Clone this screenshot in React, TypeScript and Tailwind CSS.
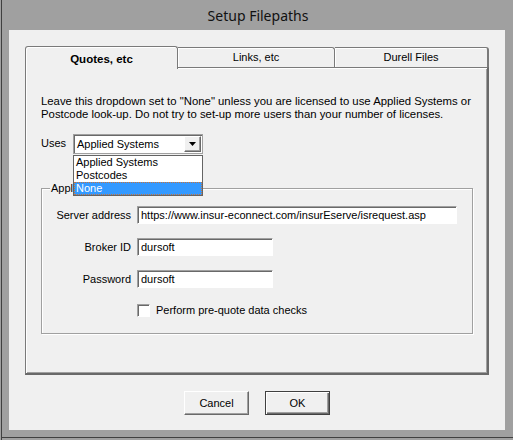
const sunken =
  "bg-white border border-t-[#a0a0a0] border-l-[#a0a0a0] border-r-white border-b-white shadow-[inset_1px_1px_0_#696969]";

function TextBox({ value, width }: { value: string; width: string }) {
  return (
    <div className={`${width} h-[18px] ${sunken} pl-[3px] flex items-center leading-none`}>
      {value}
    </div>
  );
}

function UsesDropdown() {
  const items = ["Applied Systems", "Postcodes", "None"];
  return (
    <div className="relative w-[130px] h-[20px] border border-[#a0a0a0] shadow-[inset_1px_1px_0_#696969] bg-white flex items-center">
      <span className="pl-[3px] flex-1 leading-none">Applied Systems</span>
      <div className="w-[17px] h-[16px] mr-[1px] bg-[#f0f0f0] border border-t-white border-l-white border-r-[#696969] border-b-[#696969] shadow-[inset_-1px_-1px_0_#a0a0a0] flex items-center justify-center">
        <svg width="7" height="4" viewBox="0 0 7 4">
          <path d="M0 0h7L3.5 4z" fill="#000" />
        </svg>
      </div>

      {/* open popup list, drawn over the group box label */}
      <div className="absolute left-[-1px] top-[20px] z-20 w-[130px] h-[41px] bg-white border border-[#646464] flex flex-col">
        {items.map((it) => (
          <div
            key={it}
            className={
              it === "None"
                ? "h-[13px] bg-[#3399ff] text-white border border-dotted border-[#c8743a] pl-[1px] leading-[11px]"
                : "h-[13px] pl-[2px] leading-[13px]"
            }
          >
            {it}
          </div>
        ))}
      </div>
    </div>
  );
}

export default function App() {
  return (
    <div className="w-[513px] h-[440px] bg-[#a0a0a0] flex flex-col overflow-hidden text-[11px] text-black font-['Liberation_Sans',Arial,sans-serif] shadow-[inset_1px_0_0_#a0a0a0,inset_2px_0_0_#404040,inset_0_-2px_0_#a0a0a0,inset_0_-3px_0_#404040]">
      <div className="h-[30px] flex items-center justify-center text-[14px] text-[#111] font-['Noto_Sans',sans-serif] pl-[3px]">
        Setup Filepaths
      </div>

      <div className="ml-[9px] mr-[8px] h-[400px] bg-[#f0f0f0] pl-[16px] pt-[16px] flex flex-col">
        {/* tab strip */}
        <div className="w-[464px] h-[21px] flex items-end">
          <div className="relative z-10 w-[153px] h-[23px] -mb-[2px] bg-[#f0f0f0] border-l border-t border-r border-[#7a7a7a] rounded-tl-[3px] rounded-tr-[3px] shadow-[inset_1px_1px_0_white] flex items-start justify-center pt-[4px] font-bold text-[11.5px]">
            Quotes, etc
          </div>
          <div className="w-[157px] h-[20px] bg-[#f0f0f0] border-t border-r border-[#7a7a7a] rounded-tr-[3px] shadow-[inset_1px_1px_0_white] flex items-center justify-center pb-[1px]">
            Links, etc
          </div>
          <div className="w-[154px] h-[20px] bg-[#f0f0f0] border-t border-r-2 border-[#7a7a7a] rounded-tr-[3px] shadow-[inset_1px_1px_0_white] flex items-center justify-center pb-[1px]">
            Durell Files
          </div>
        </div>

        {/* tab pane */}
        <div className="w-[464px] h-[308px] border-l border-t border-[#7a7a7a] border-r-2 border-b-2 border-r-[#696969] border-b-[#696969] shadow-[inset_1px_1px_0_white,inset_-1px_-1px_0_#a0a0a0] pl-[15px] pt-[27px] flex flex-col">
          <p className="leading-[13px] w-[440px] text-[11.35px] whitespace-nowrap">
            Leave this dropdown set to "None" unless you are licensed to use Applied Systems or
            <br />
            Postcode look-up. Do not try to set-up more users than your number of licenses.
          </p>

          <div className="mt-[13px] flex items-center">
            <span className="w-[32px] pb-[1px]">Uses</span>
            <UsesDropdown />
          </div>

          {/* group box */}
          <div className="relative mt-[34px] w-[432px] h-[146px] border border-[#a0a0a0] shadow-[1px_1px_0_white,inset_1px_1px_0_white] pt-[17px] flex flex-col">
            <span className="absolute left-[8px] -top-[7px] bg-[#f0f0f0] px-[1px] leading-[13px]">
              Applied Systems
            </span>

            <div className="flex items-start">
              <span className="w-[89px] text-right pt-[1px]">Server address</span>
              <div className="ml-[6px]">
                <TextBox value="https://www.insur-econnect.com/insurEserve/isrequest.asp" width="w-[320px]" />
              </div>
            </div>

            <div className="mt-[14px] flex items-start">
              <span className="w-[89px] text-right pt-[1px]">Broker ID</span>
              <div className="ml-[6px]">
                <TextBox value="dursoft" width="w-[136px]" />
              </div>
            </div>

            <div className="mt-[14px] flex items-start">
              <span className="w-[89px] text-right pt-[1px]">Password</span>
              <div className="ml-[6px]">
                <TextBox value="dursoft" width="w-[136px]" />
              </div>
            </div>

            <div className="mt-[14px] ml-[95px] flex items-center">
              <div className={`w-[13px] h-[13px] ${sunken}`} />
              <span className="ml-[6px]">Perform pre-quote data checks</span>
            </div>
          </div>
        </div>

        {/* buttons */}
        <div className="w-[480px] -ml-[8px] mt-[16px] flex justify-center gap-[16px]">
          <button className="w-[65px] h-[24px] bg-[#f0f0f0] border border-t-white border-l-white border-r-[#696969] border-b-[#696969] shadow-[inset_-1px_-1px_0_#a0a0a0] leading-none">
            Cancel
          </button>
          <button className="w-[65px] h-[24px] bg-[#f0f0f0] border border-[#404040] shadow-[inset_1px_1px_0_white,inset_-1px_-1px_0_#696969,inset_-2px_-2px_0_#a0a0a0] leading-none">
            OK
          </button>
        </div>
      </div>
    </div>
  );
}
